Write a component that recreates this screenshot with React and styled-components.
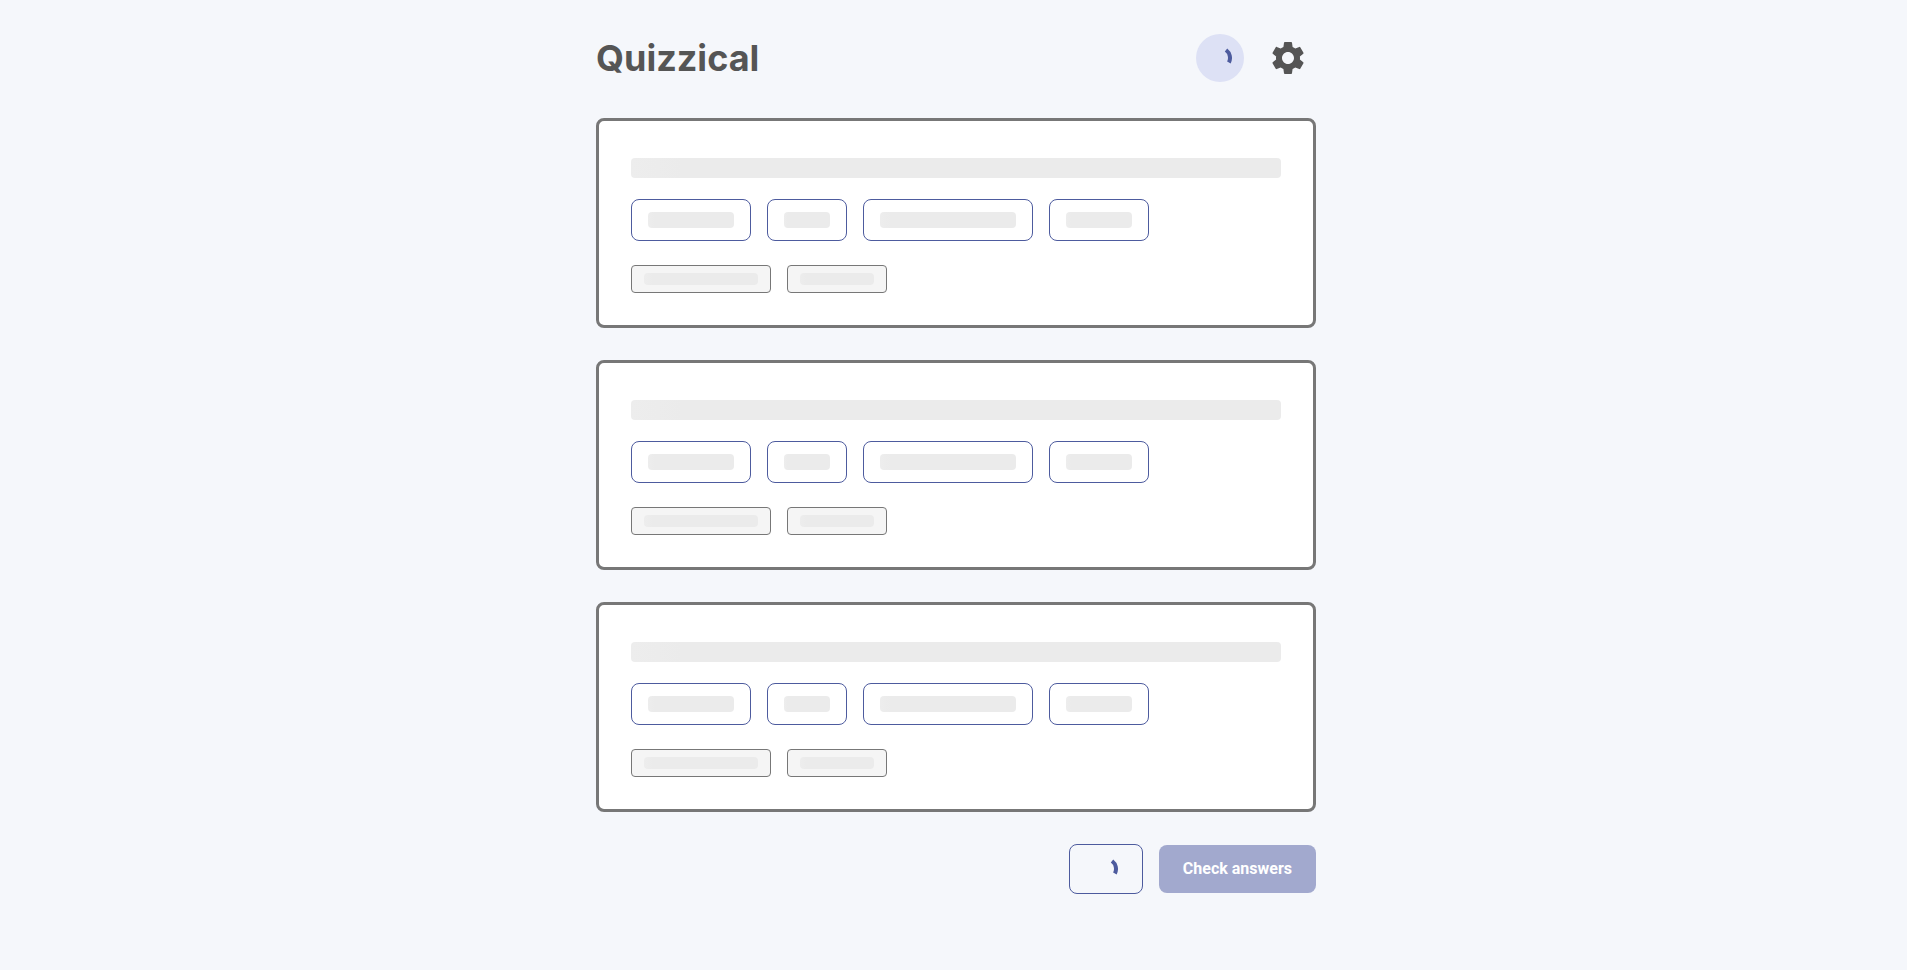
import React from "react";
import styled, { createGlobalStyle } from "styled-components";
import { MdSettings } from "react-icons/md";

const GlobalStyle = createGlobalStyle`
  *, *::before, *::after { box-sizing: border-box; }
  body {
    margin: 0;
    background: #f5f7fb;
    color: #555555;
    font-family: Roboto, "Liberation Sans", sans-serif;
  }
`;

const Page = styled.div`
  min-height: 100vh;
  padding: 30px 16px 32px 21px;
`;

const Container = styled.div`
  max-width: 720px;
  margin: 0 auto;
  display: flex;
  flex-direction: column;
  gap: 32px;
`;

const Header = styled.header`
  display: flex;
  align-items: center;
  justify-content: space-between;
`;

const Title = styled.h1`
  margin: 0;
  font-family: Inter, sans-serif;
  font-size: 36px;
  line-height: 44px;
  font-weight: 700;
`;

const Actions = styled.div`
  display: flex;
  align-items: center;
  gap: 16px;
`;

const RoundButton = styled.button`
  display: flex;
  align-items: center;
  justify-content: center;
  width: 48px;
  height: 48px;
  padding: 0;
  border: 0;
  border-radius: 50%;
  background: #dde1f5;
  color: #4d5b9e;
`;

const IconButton = styled.button`
  display: flex;
  padding: 8px;
  border: 0;
  border-radius: 50%;
  background: transparent;
  color: #555555;
  cursor: pointer;
`;

const Questions = styled.main`
  display: flex;
  flex-direction: column;
  gap: 32px;
`;

const Card = styled.article`
  padding: 32px;
  border: 3px solid #777777;
  border-radius: 8px;
  background: #ffffff;
`;

const Skeleton = styled.div`
  height: ${({ $height }) => $height}px;
  border-radius: 4px;
  background: linear-gradient(90deg, #ededed, #ebebeb 8%);
`;

const QuestionLine = styled.div`
  padding: 5px 0;
  margin-bottom: 16px;
`;

const Row = styled.div`
  display: flex;
  flex-wrap: wrap;
  gap: 16px;
`;

const Answer = styled.div`
  width: ${({ $width }) => $width}px;
  padding: 12px 16px;
  border: 1px solid #4d5b9e;
  border-radius: 8px;
`;

const Tags = styled(Row)`
  margin-top: 24px;
`;

const Tag = styled.div`
  width: ${({ $width }) => $width}px;
  padding: 7px 12px;
  border: 1px solid #777777;
  border-radius: 4px;
  background: #f5f5f5;
`;

const Footer = styled.footer`
  display: flex;
  align-items: center;
  justify-content: flex-end;
  gap: 16px;
`;

const OutlineButton = styled.button`
  display: flex;
  padding: 12px 24px;
  border: 1px solid #4d5b9e;
  border-radius: 8px;
  background: transparent;
  color: #4d5b9e;
`;

const PrimaryButton = styled.button`
  padding: 12px 24px;
  border: 0;
  border-radius: 8px;
  background: #a2a9ce;
  color: #ffffff;
  font-family: inherit;
  font-size: 16px;
  line-height: 24px;
  font-weight: 700;
`;

const Spinner = () => (
  <svg width="24" height="24" viewBox="0 0 24 24" fill="none" aria-hidden="true">
    <path
      d="M18.02 3.98A10 10 0 0 1 20.9 16.5"
      stroke="currentColor"
      strokeWidth="4"
    />
  </svg>
);

const answerWidths = [120, 80, 170, 100];
const tagWidths = [140, 100];

const QuestionSkeleton = () => (
  <Card aria-busy="true">
    <QuestionLine>
      <Skeleton $height={20} />
    </QuestionLine>
    <Row>
      {answerWidths.map((width) => (
        <Answer key={width} $width={width}>
          <Skeleton $height={16} />
        </Answer>
      ))}
    </Row>
    <Tags>
      {tagWidths.map((width) => (
        <Tag key={width} $width={width}>
          <Skeleton $height={12} />
        </Tag>
      ))}
    </Tags>
  </Card>
);

export default function App() {
  return (
    <>
      <GlobalStyle />
      <Page>
        <Container>
          <Header>
            <Title>Quizzical</Title>
            <Actions>
              <RoundButton type="button" disabled aria-label="Loading">
                <Spinner />
              </RoundButton>
              <IconButton type="button" aria-label="Settings">
                <MdSettings size={40} />
              </IconButton>
            </Actions>
          </Header>
          <Questions>
            <QuestionSkeleton />
            <QuestionSkeleton />
            <QuestionSkeleton />
          </Questions>
          <Footer>
            <OutlineButton type="button" disabled aria-label="Loading new questions">
              <Spinner />
            </OutlineButton>
            <PrimaryButton type="button" disabled>
              Check answers
            </PrimaryButton>
          </Footer>
        </Container>
      </Page>
    </>
  );
}
